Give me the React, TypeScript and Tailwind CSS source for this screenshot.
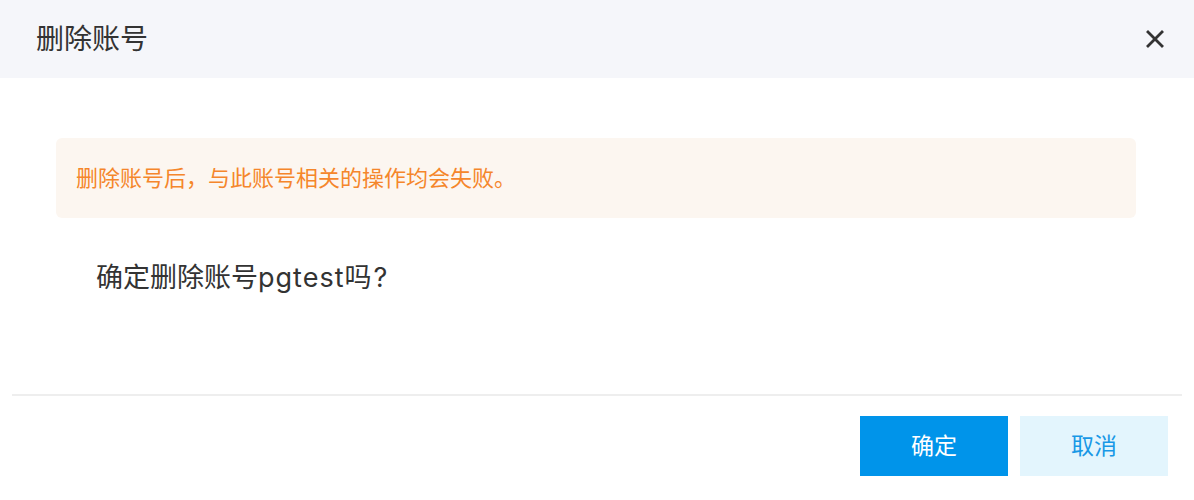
export default function App() {
  const font = { fontFamily: '"Inter", "Noto Sans CJK SC", sans-serif' };
  return (
    <div className="w-[1194px] h-[500px] bg-white flex flex-col" style={font}>
      <div className="h-[78px] bg-[#f5f6fa] flex items-center justify-between pl-[36px] pr-[30px]">
        <span className="text-[28px] text-[#333333]">删除账号</span>
        <svg width="18" height="18" viewBox="0 0 18 18" className="text-[#333333]">
          <path d="M2 2 L16 16 M16 2 L2 16" stroke="currentColor" strokeWidth="2.8" strokeLinecap="square" />
        </svg>
      </div>
      <div className="mt-[60px] ml-[56px] mr-[58px] h-[80px] rounded-[6px] bg-[#fcf6f0] flex items-center pl-[20px]">
        <span className="text-[22px] text-[#f5862b]">删除账号后，与此账号相关的操作均会失败。</span>
      </div>
      <div className="mt-[40px] pl-[96px] text-[27px] text-[#333333] leading-[40px]">
        确定删除账号<span className="tracking-[1px]">pgtest</span>吗<span className="font-['Inter'] ml-[2px]">?</span>
      </div>
      <div className="mt-[96px] mx-[12px] h-[2px] bg-[#eeeeee]" />
      <div className="mt-[20px] flex justify-end gap-[12px] pr-[26px]">
        <button className="w-[148px] h-[60px] bg-[#0094ea] text-white text-[23px]">确定</button>
        <button className="w-[148px] h-[60px] bg-[#e3f5fd] text-[#1898e6] text-[23px]">取消</button>
      </div>
    </div>
  );
}
